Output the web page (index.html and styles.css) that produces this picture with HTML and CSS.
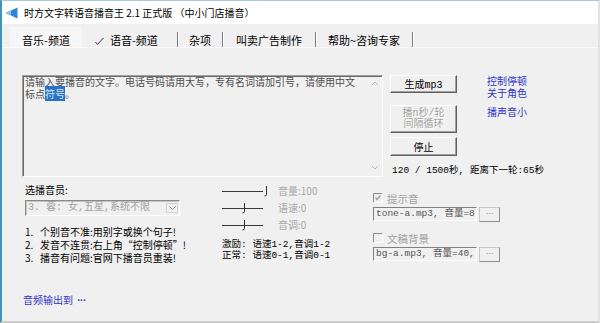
FILE: index.html
```html
<!DOCTYPE html>
<html lang="zh-CN">
<head>
<meta charset="utf-8">
<title>时方文字转语音播音王</title>
<link rel="stylesheet" href="styles.css">
</head>
<body>
<div class="win">
  <div class="titlebar">
    <svg class="appicon" width="13" height="12" viewBox="0 0 13 12">
      <path d="M0.5,6 L12.5,0.5 L12.5,11.5 Z" fill="#2f86d6"/>
      <path d="M0.5,6 L6,3.5 L6,8.5 Z" fill="#8cc4f0"/>
    </svg>
    <span class="title">时方文字转语音播音王 2.1 正式版 （中小门店播音）</span>
  </div>
  <div class="tabs">
    <div class="tab tab1">音乐-频道</div>
    <div class="tab tab2"><svg class="tick" width="9" height="8" viewBox="0 0 9 8"><polyline points="0.5,5 2.5,7.5 8.5,0.8" fill="none" stroke="#333" stroke-width="1"/></svg><span>语音-频道</span></div>
    <div class="sep"></div>
    <div class="tab tab3">杂项</div>
    <div class="sep"></div>
    <div class="tab tab4">叫卖广告制作</div>
    <div class="sep"></div>
    <div class="tab tab5">帮助~咨询专家</div>
    <div class="sep"></div>
  </div>
  <div class="page">
    <div class="toprow">
      <div class="editor">
        <div class="etext"><div class="eline">请输入要播音的文字。电话号码请用大写，专有名词请加引号，请使用中文</div><div class="eline">标点<span class="sel">符号</span>。</div></div>
        <div class="vscroll">
          <svg width="8" height="6" viewBox="0 0 8 6"><polyline points="1,5 4,2 7,5" fill="none" stroke="#b4b4b4" stroke-width="1"/></svg>
          <svg width="8" height="6" viewBox="0 0 8 6"><polyline points="1,1 4,4 7,1" fill="none" stroke="#b4b4b4" stroke-width="1"/></svg>
        </div>
      </div>
      <div class="btncol">
        <div class="btn b1">生成mp3</div>
        <div class="btn b2">播n秒/轮<br>间隔循环</div>
        <div class="btn b3">停止</div>
        <div class="status">120 / 1500秒, 距离下一轮:65秒</div>
      </div>
      <div class="links">
        <div class="link">控制停顿</div>
        <div class="link">关于角色</div>
        <div class="link gap">播声音小</div>
      </div>
    </div>
    <div class="botrow">
      <div class="colL">
        <div class="lbl">选播音员:</div>
        <div class="combo">
          <div class="ctext">3. 蓉: 女,五星,系统不限</div>
          <div class="drop"><svg width="7" height="4" viewBox="0 0 7 4"><polyline points="0.5,0.5 3.5,3.5 6.5,0.5" fill="none" stroke="#8a8a8a" stroke-width="1"/></svg></div>
        </div>
        <div class="list">
          <div class="li"><span class="num">1.</span>个别音不准:用别字或换个句子!</div>
          <div class="li"><span class="num">2.</span>发音不连贯:右上角“控制停顿”!</div>
          <div class="li"><span class="num">3.</span>播音有问题:官网下播音员重装!</div>
        </div>
      </div>
      <div class="colM">
        <div class="srow">
          <div class="slider"><svg width="48" height="12" viewBox="0 0 48 12"><line x1="0" y1="6.5" x2="41" y2="6.5" stroke="#3a3a3a" stroke-width="1"/><path d="M44.5,1 L44.5,9.5 Q44.5,11 42.5,11" fill="none" stroke="#2a2a2a" stroke-width="1"/></svg></div>
          <span class="slabel">音量:100</span>
        </div>
        <div class="srow">
          <div class="slider"><svg width="48" height="12" viewBox="0 0 48 12"><line x1="0" y1="6.5" x2="41" y2="6.5" stroke="#3a3a3a" stroke-width="1"/><path d="M22.5,1 L22.5,9.5 Q22.5,11 20.5,11" fill="none" stroke="#2a2a2a" stroke-width="1"/></svg></div>
          <span class="slabel">语速:0</span>
        </div>
        <div class="srow">
          <div class="slider"><svg width="48" height="12" viewBox="0 0 48 12"><line x1="0" y1="6.5" x2="41" y2="6.5" stroke="#3a3a3a" stroke-width="1"/><path d="M22.5,1 L22.5,9.5 Q22.5,11 20.5,11" fill="none" stroke="#2a2a2a" stroke-width="1"/></svg></div>
          <span class="slabel">音调:0</span>
        </div>
        <div class="tips">
          <div>激励: 语速1-2,音调1-2</div>
          <div>正常: 语速0-1,音调0-1</div>
        </div>
      </div>
      <div class="colR">
        <div class="chk">
          <svg width="10" height="10" viewBox="0 0 10 10"><path d="M0.5,9.5 L0.5,0.5 L9.5,0.5" fill="none" stroke="#8c8c8c"/><path d="M9.5,0.5 L9.5,9.5 L0.5,9.5" fill="none" stroke="#ffffff"/><polyline points="2.5,4.5 4,6.5 7.5,2.5" fill="none" stroke="#9a9a9a" stroke-width="1.3"/></svg>
          <span>提示音</span>
        </div>
        <div class="tbrow">
          <div class="tb">tone-a.mp3, 音量=8</div>
          <div class="dots">···</div>
        </div>
        <div class="chk chk2">
          <svg width="10" height="10" viewBox="0 0 10 10"><path d="M0.5,9.5 L0.5,0.5 L9.5,0.5" fill="none" stroke="#8c8c8c"/><path d="M9.5,0.5 L9.5,9.5 L0.5,9.5" fill="none" stroke="#ffffff"/></svg>
          <span>文稿背景</span>
        </div>
        <div class="tbrow">
          <div class="tb">bg-a.mp3, 音量=40,</div>
          <div class="dots">···</div>
        </div>
      </div>
    </div>
    <div class="footer">音频输出到 <span class="more">···</span></div>
  </div>
</div>
</body>
</html>
```
FILE: styles.css
```css
* { box-sizing: border-box; }
html, body { margin: 0; padding: 0; }
body {
  width: 600px;
  height: 323px;
  overflow: hidden;
  background: #f0f0f0;
  font-family: "Noto Sans CJK SC", "Noto Sans", sans-serif;
  font-size: 10px;
  color: #000;
}
.win {
  width: 600px;
  height: 323px;
  display: flex;
  flex-direction: column;
  background: #f0f0f0;
  border-left: 2px solid #3f94b4;
  border-top: 1px solid #a9c8d8;
  border-right: 2px solid #e2e2e2;
  border-bottom: 2px solid #cbcbcb;
}
.titlebar {
  height: 23px;
  flex: none;
  background: #fff;
  display: flex;
  align-items: center;
  padding-left: 3px;
  gap: 6px;
}
.title { font-size: 10px; line-height: 12px; color: #000; white-space: nowrap; margin-top: 1px; }

.tabs {
  height: 24px;
  flex: none;
  display: flex;
  align-items: flex-end;
  padding-left: 8px;
  font-size: 11px;
  border-bottom: 1px solid #fafafa;
}
.tab {
  height: 20px;
  padding-top: 6px;
  line-height: 14px;
  text-align: center;
  white-space: nowrap;
}
.tab1 { width: 72px; background: #f6f6f6; }
.tab2 { width: 95px; text-align: left; padding-left: 13px; display: flex; align-items: flex-start; gap: 6px; }
.tab2 .tick { margin-top: 4px; }
.tab3 { width: 44px; }
.tab4 { width: 92px; }
.tab5 { width: 96px; }
.sep { width: 1px; height: 15px; background: #7c7c7c; box-shadow: 1px 0 0 #fff; }

.page {
  flex: 1;
  display: flex;
  flex-direction: column;
  padding: 27px 0 14px 20px;
}
.toprow { display: flex; height: 102px; flex: none; }
.editor {
  width: 361px;
  height: 102px;
  display: flex;
  border-top: 1px solid #a0a0a0;
  border-left: 1px solid #a0a0a0;
  border-right: 1px solid #fff;
  border-bottom: 1px solid #fff;
  box-shadow: inset 1px 1px 0 #6a6a6a;
}
.etext {
  flex: 1;
  min-width: 0;
  padding-left: 2px;
  color: #4e4e4e;
}
.eline { height: 12px; line-height: 12px; white-space: nowrap; }
.sel { background: #2a72c6; color: #d6e4f5; }
.vscroll {
  width: 15px;
  flex: none;
  display: flex;
  flex-direction: column;
  justify-content: space-between;
  align-items: center;
  padding: 4px 0 5px;
}

.btncol { width: 67px; margin-left: 7px; display: flex; flex-direction: column; flex: none; }
.btn {
  display: flex;
  align-items: center;
  justify-content: center;
  text-align: center;
  font-family: "Liberation Mono", "Noto Sans CJK SC", monospace;
  font-size: 10px;
  background: #f0f0f0;
  border: 1px solid;
  border-color: #fff #5e5e5e #5e5e5e #fff;
  box-shadow: inset -1px -1px 0 #a0a0a0;
}
.b1 { height: 18px; }
.b2 { height: 29px; margin-top: 12px; color: #a0a0a0; line-height: 11px; text-shadow: 1px 1px 0 #fff; }
.b3 { height: 19px; margin-top: 4px; }
.status {
  margin-top: 9px;
  padding-left: 2px;
  white-space: nowrap;
  font-family: "Liberation Mono", "Noto Sans CJK SC", monospace;
  font-size: 9.5px;
  line-height: 12px;
}
.links { margin-left: 30px; color: #2f33c8; line-height: 12px; white-space: nowrap; }
.links .gap { margin-top: 7px; }

.botrow { display: flex; margin-top: 7px; flex: none; }
.colL { width: 200px; padding-left: 3px; }
.lbl { line-height: 12px; }
.combo {
  margin-top: 4px;
  width: 155px;
  height: 16px;
  display: flex;
  border-top: 1px solid #8a8a8a;
  border-left: 1px solid #8a8a8a;
  border-right: 1px solid #fff;
  border-bottom: 1px solid #fff;
  box-shadow: inset 1px 1px 0 #c4c4c4;
}
.ctext {
  flex: 1;
  min-width: 0;
  padding-left: 2px;
  line-height: 14px;
  color: #a0a0a0;
  white-space: nowrap;
  font-family: "Liberation Mono", "Noto Sans CJK SC", monospace;
  font-size: 10px;
}
.drop {
  width: 12px;
  flex: none;
  margin: 2px 1px 2px 0;
  border: 1px solid #d2d2d2;
  display: flex;
  align-items: center;
  justify-content: center;
}
.list { margin-top: 9px; line-height: 13px; white-space: nowrap; }
.li { height: 13px; }
.num { display: inline-block; width: 15px; }

.colM { width: 151px; margin-top: -2px; }
.srow { height: 17px; display: flex; align-items: center; }
.slider { width: 56px; display: flex; align-items: center; }
.slabel { color: #a8a8a8; line-height: 12px; }
.tips {
  margin-top: 6px;
  line-height: 11px;
  font-family: "Liberation Mono", "Noto Sans CJK SC", monospace;
  font-size: 9.5px;
  white-space: nowrap;
}
.tips div { height: 11px; }

.colR { margin-top: 8px; }
.chk { display: flex; align-items: center; gap: 4px; height: 12px; color: #a0a0a0; font-size: 10.5px; }
.chk2 { margin-top: 10px; }
.tbrow { display: flex; gap: 2px; margin-top: 3px; }
.tb {
  width: 104px;
  height: 14px;
  border-top: 1px solid #808080;
  border-left: 1px solid #808080;
  border-right: 1px solid #fff;
  border-bottom: 1px solid #fff;
  padding-left: 2px;
  font-family: "Liberation Mono", "Noto Sans CJK SC", monospace;
  font-size: 9.5px;
  line-height: 12px;
  color: #555;
  white-space: nowrap;
}
.dots {
  width: 21px;
  height: 15px;
  border: 1px solid;
  border-color: #c8c8c8 #8e8e8e #8e8e8e #c8c8c8;
  color: #8a8a8a;
  font-family: "Liberation Sans", "DejaVu Sans", sans-serif;
  font-size: 9px;
  line-height: 11px;
  letter-spacing: -0.5px;
  text-align: center;
}

.footer { margin-top: auto; line-height: 12px; color: #2f33c8; padding-left: 1px; white-space: nowrap; }
.footer .more { margin-left: 2px; font-family: "Liberation Sans", "DejaVu Sans", sans-serif; font-weight: bold; letter-spacing: -0.5px; }
```
